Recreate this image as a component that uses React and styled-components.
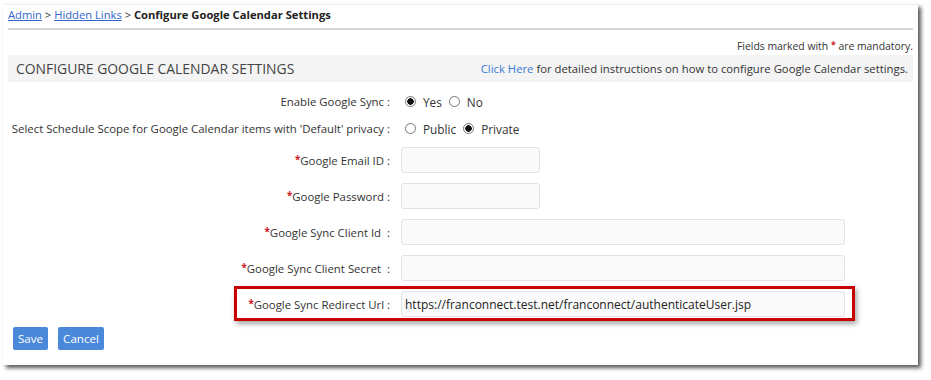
import styled, { createGlobalStyle } from 'styled-components';

const GlobalStyle = createGlobalStyle`
  body {
    margin: 0;
    background: #ffffff;
    font-family: "Open Sans", "Liberation Sans", sans-serif;
    color: #333;
  }
`;

const rows = [
  { label: 'Google Email ID :', size: 'short' },
  { label: 'Google Password :', size: 'short' },
  { label: 'Google Sync Client Id\u00a0 :', size: 'long' },
  { label: 'Google Sync Client Secret\u00a0 :', size: 'long' },
  {
    label: 'Google Sync Redirect Url :',
    size: 'long',
    value: 'https://franconnect.test.net/franconnect/authenticateUser.jsp',
    highlight: true,
  },
];

const App = () => {
  return (
    <Wrapper>
      <GlobalStyle />
      <Card>
        <Breadcrumb>
          <a href="#admin">Admin</a> &gt; <a href="#hidden">Hidden Links</a> &gt;{' '}
          <strong>Configure Google Calendar Settings</strong>
        </Breadcrumb>
        <Note>
          Fields marked with <Star>*</Star> are mandatory.
        </Note>
        <SectionBar>
          <h2>CONFIGURE GOOGLE CALENDAR SETTINGS</h2>
          <p>
            <a href="#help">Click Here</a> for detailed instructions on how to
            configure Google Calendar settings.
          </p>
        </SectionBar>

        <Form>
          <Row $kind="radio">
            <Label>Enable Google Sync :</Label>
            <Options>
              <Radio $checked />
              <span>Yes</span>
              <Radio />
              <span>No</span>
            </Options>
          </Row>
          <Row $kind="radio">
            <Label>
              Select Schedule Scope for Google Calendar items with 'Default'
              privacy :
            </Label>
            <Options>
              <Radio />
              <span>Public</span>
              <Radio $checked />
              <span>Private</span>
            </Options>
          </Row>
          {rows.map((r) => (
            <Row key={r.label} $highlight={r.highlight}>
              <Label>
                <Star>*</Star>
                {r.label}
              </Label>
              <Input $size={r.size} defaultValue={r.value || ''} />
            </Row>
          ))}
        </Form>

        <Actions>
          <Button>Save</Button>
          <Button>Cancel</Button>
        </Actions>
      </Card>
    </Wrapper>
  );
};

export default App;

const Wrapper = styled.div`
  padding: 4px 0 0 3px;
  width: 931px;
  height: 380px;
  box-sizing: border-box;
`;

const Card = styled.section`
  width: 915px;
  height: 361px;
  box-sizing: border-box;
  background: #fff;
  border-top: 1px solid #eee;
  padding: 0 5px;
  box-shadow: 3px 3px 4px rgba(0, 0, 0, 0.65);
  font-size: 11.4px;
`;

const Breadcrumb = styled.div`
  height: 23px;
  line-height: 20px;
  font-size: 11.2px;
  color: #333;
  border-bottom: 2px solid #d8d8d8;
  a {
    color: #3366cc;
    text-decoration: underline;
  }
  strong {
    color: #222;
  }
`;

const Star = styled.span`
  color: #d0161e;
  font-size: 0.85em;
  font-weight: bold;
  vertical-align: 2px;
`;

const Note = styled.div`
  height: 25px;
  box-sizing: border-box;
  padding-top: 7px;
  line-height: 16px;
  text-align: right;
  font-size: 10.4px;
  color: #333;
`;

const SectionBar = styled.div`
  height: 27px;
  background: #f4f4f4;
  display: flex;
  align-items: center;
  justify-content: space-between;
  padding: 0 5px 0 8px;
  h2 {
    margin: 0;
    font-size: 13.9px;
    font-weight: 400;
    color: #444;
  }
  p {
    margin: 0;
    font-size: 11.3px;
    color: #333;
  }
  a {
    color: #3a7bd5;
    text-decoration: none;
  }
`;

const Form = styled.div`
  margin: 6px 0 0 -5px;
  display: flex;
  flex-direction: column;
`;

const Row = styled.div`
  position: relative;
  display: grid;
  grid-template-columns: 387px auto;
  column-gap: 11px;
  align-items: center;
  height: ${(p) => (p.$kind === 'radio' ? '27px' : '36px')};

  ${(p) =>
    p.$highlight &&
    `
    &::after {
      content: '';
      position: absolute;
      left: 231px;
      width: 615px;
      top: 0;
      height: 29px;
      border: 3px solid #c80000;
      box-shadow: 2px 3px 5px rgba(0, 0, 0, 0.35);
      pointer-events: none;
    }
  `}
`;

const Label = styled.label`
  text-align: right;
  white-space: nowrap;
  font-size: 11.4px;
  color: #333;
`;

const Options = styled.div`
  display: flex;
  align-items: center;
  gap: 5px;
  padding-left: 4px;
  font-size: 11.8px;
  span {
    margin-right: 2px;
  }
`;

const Radio = styled.span`
  width: 11px;
  height: 11px;
  box-sizing: border-box;
  border-radius: 50%;
  border: 1px solid #777;
  background: ${(p) =>
    p.$checked ? 'radial-gradient(circle, #111 0 3px, #fff 3.5px)' : '#fff'};
`;

const Input = styled.input`
  width: ${(p) => (p.$size === 'short' ? '139px' : '444px')};
  height: 26px;
  box-sizing: border-box;
  border: 1px solid #e3e3e3;
  border-radius: 3px;
  background: #fafafa;
  padding: 0 3px;
  font-family: inherit;
  font-size: 12px;
  color: #222;
  outline: none;
`;

const Actions = styled.div`
  display: flex;
  gap: 10px;
  margin: 5px 0 0 5px;
`;

const Button = styled.button`
  height: 23px;
  padding: 0 5px;
  border: none;
  border-radius: 2px;
  background: #4a88da;
  color: #fff;
  font-family: inherit;
  font-size: 11.6px;
`;
